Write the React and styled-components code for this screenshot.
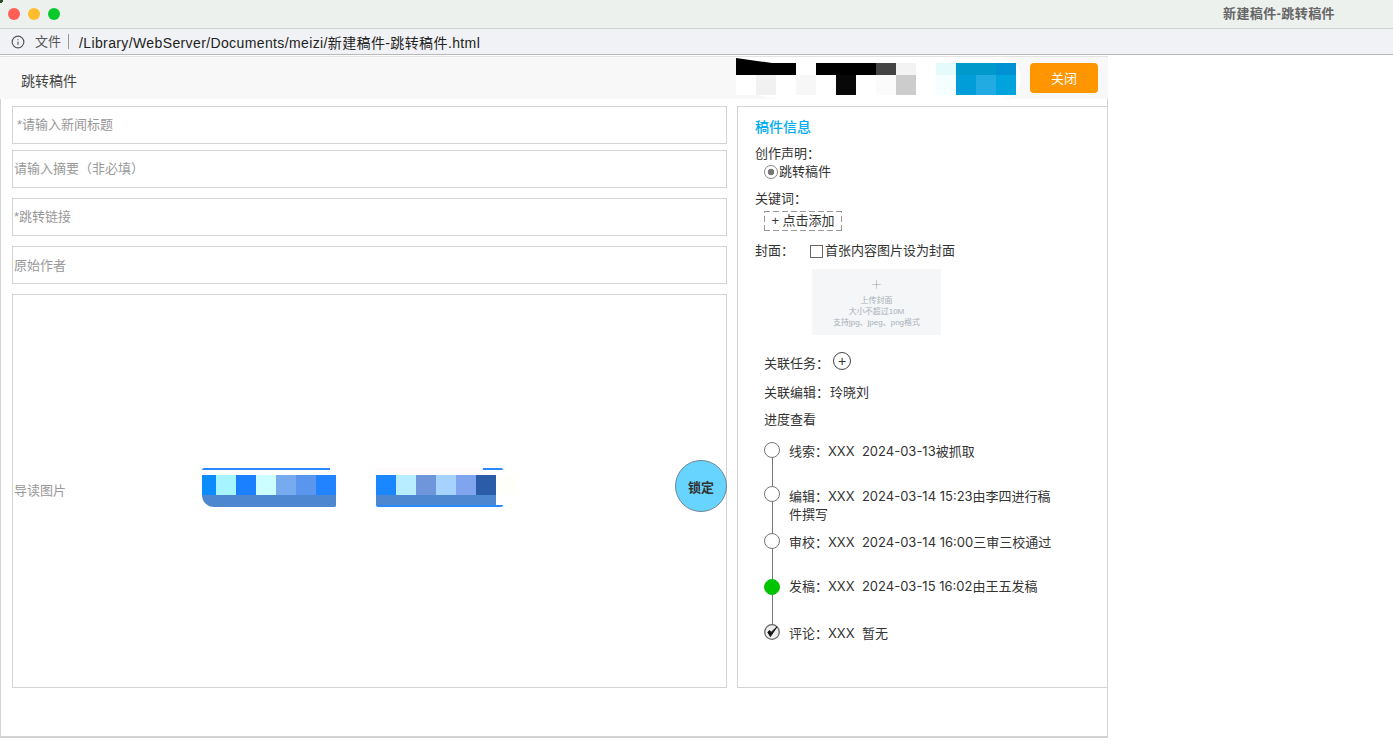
import styled, { createGlobalStyle } from "styled-components";
import { Info, Plus } from "lucide-react";

const GlobalStyle = createGlobalStyle`
  html, body {
    margin: 0;
    background: #fff;
    font-family: "Liberation Sans", "Noto Sans CJK SC", sans-serif;
  }
  * { box-sizing: border-box; }
`;

// browser chrome
const TitleBar = styled.div`
  height: 29px;
  display: flex;
  align-items: center;
  padding-left: 8px;
  background: radial-gradient(circle at 0 0, #2d4a2d 0 3px, transparent 3.5px), #edf1ee;
  border-bottom: 1px solid #cfd2d0;
`;

const Light = styled.span`
  width: 12px;
  height: 12px;
  border-radius: 50%;
  margin-right: 8px;
  background: ${(p) => p.$color};
`;

const WindowTitle = styled.div`
  margin-left: auto;
  width: 170px;
  font-size: 13px;
  letter-spacing: 0.4px;
  font-weight: 700;
  color: #666;
  margin-top: -3px;
`;

const AddressBar = styled.div`
  height: 26px;
  display: flex;
  align-items: center;
  padding-left: 11px;
  background: #f1f2f5;
  border-bottom: 1px solid #b9b9b9;
  font-size: 13px;
  color: #222;
`;

const Scheme = styled.span`
  margin-left: 10px;
  padding-right: 7px;
  border-right: 1px solid #999;
  line-height: 15px;
  color: #555;
`;

const Url = styled.span`
  margin-left: 10px;
  font-size: 14px;
  letter-spacing: 0.38px;
`;

// page
const Page = styled.div`
  width: 1108px;
  height: 682px;
  margin-top: 1px;
  border: 1px solid #d4d4d4;
  border-top: 1px solid #e4e4e4;
  border-bottom-width: 2px;
  background: #fff;
`;

const Header = styled.header`
  height: 42px;
  margin: 0 -1px;
  display: flex;
  align-items: flex-start;
  padding: 6px 10px 0 21px;
  background: #f8f8f8;
`;

const HeaderTitle = styled.div`
  margin-top: 6px;
  font-size: 14px;
  line-height: 24px;
  color: #444;
`;

const Mosaic = styled.div`
  position: relative;
  margin-left: auto;
  margin-right: 14px;
  width: 280px;

  &::before {
    content: "";
    position: absolute;
    inset: -6px -5px -4px 0;
    background: #fff;
    border-radius: 0 30px 30px 60px;
  }

  &::after {
    content: "";
    position: absolute;
    left: 0;
    top: -5px;
    width: 36px;
    height: 5px;
    background: #000;
    clip-path: polygon(0 0, 100% 100%, 0 100%);
  }
`;

const PixelRow = styled.div`
  position: relative;
  z-index: 1;
  display: flex;
  height: ${(p) => p.$height}px;
`;

const Pixel = styled.span`
  flex: none;
  width: ${(p) => p.$width || 20}px;
  background: ${(p) => p.$color};
`;

const CloseButton = styled.button`
  flex: none;
  width: 68px;
  height: 30px;
  padding: 0 0 2px;
  border: 0;
  border-radius: 4px;
  background: #ff9500;
  color: #fff;
  font: inherit;
  font-size: 13px;
`;

const Body = styled.div`
  display: flex;
  gap: 10px;
  padding: 7px 0 0 11px;
`;

const LeftColumn = styled.div`
  width: 715px;
`;

const Field = styled.input`
  display: block;
  width: 100%;
  height: 38px;
  margin-bottom: ${(p) => p.$after}px;
  padding: 0 0 ${(p) => (p.$lift ? 2 : 0)}px ${(p) => p.$indent}px;
  border: 1px solid #d4d4d4;
  border-radius: 0;
  outline: none;
  font: inherit;
  font-size: 13px;
  color: #333;

  &::placeholder {
    color: #999;
    opacity: 1;
  }
`;

const ImageBox = styled.div`
  height: 394px;
  display: flex;
  align-items: center;
  padding-left: 1px;
  border: 1px solid #d4d4d4;
  font-size: 13px;
  color: #999;
`;

const ImageLabel = styled.span`
  width: 188px;
  flex: none;
  margin-bottom: 3px;
`;

const Thumb = styled.div`
  position: relative;
  flex: none;
  width: ${(p) => p.$width}px;
  margin-right: ${(p) => p.$after}px;
  margin-bottom: 7px;
  padding-top: 5px;
  border-top: 2px solid #2b88ff;
  border-radius: 2px;

  &::before {
    content: "";
    position: absolute;
    top: -2px;
    left: ${(p) => p.$maskLeft}px;
    width: ${(p) => p.$maskWidth}px;
    height: 7px;
    background: ${(p) => p.$mask};
    border-radius: 0 0 16px 0;
  }
`;

const ThumbRow = styled.div`
  display: flex;
  height: 20px;
`;

const ThumbBand = styled.div`
  width: ${(p) => p.$width}px;
  height: ${(p) => p.$height}px;
  background: #4d87cf;
  border-radius: ${(p) => p.$radius};
`;

const ThumbEdge = styled.div`
  height: 2px;
  background: ${(p) => p.$color};
  border-radius: 0 0 2px 2px;
`;

const LockButton = styled.button`
  flex: none;
  margin-left: auto;
  margin-right: -1px;
  margin-bottom: 10px;
  width: 52px;
  height: 52px;
  padding: 0;
  border: 1px solid #6f8794;
  border-radius: 50%;
  background: #66d4ff;
  color: #333;
  font: inherit;
  font-size: 13px;
  font-weight: 700;
`;

const InfoPanel = styled.aside`
  flex: none;
  width: 371px;
  height: 582px;
  margin-right: -1px;
  padding: 11px 0 0 17px;
  border: 1px solid #d4d4d4;
  border-right-width: 0;
  font-size: 13px;
  color: #333;
`;

const PanelTitle = styled.div`
  line-height: 18px;
  font-size: 14px;
  font-weight: 500;
  color: #00aeef;
`;

const Row = styled.div`
  display: flex;
  align-items: center;
  min-height: 18px;
  line-height: 18px;
  margin-top: ${(p) => p.$top}px;
  margin-left: ${(p) => p.$indent || 0}px;
`;

const Radio = styled.span`
  width: 14px;
  height: 14px;
  margin-right: 1px;
  border: 1px solid #888;
  border-radius: 50%;
  background: radial-gradient(circle, #777 0 3px, #fff 3.6px);
`;

const AddTag = styled.div`
  width: 78px;
  height: 20px;
  margin: 3px 0 0 9px;
  line-height: 20px;
  text-align: center;
  background:
    repeating-linear-gradient(90deg, #999 0 6px, transparent 6px 9px) top / 100% 1px no-repeat,
    repeating-linear-gradient(90deg, #999 0 6px, transparent 6px 9px) bottom / 100% 1px no-repeat,
    repeating-linear-gradient(0deg, #999 0 6px, transparent 6px 9px) left / 1px 100% no-repeat,
    repeating-linear-gradient(0deg, #999 0 6px, transparent 6px 9px) right / 1px 100% no-repeat;
`;

const CoverLabel = styled.span`
  width: 55px;
`;

const Checkbox = styled.span`
  width: 13px;
  height: 13px;
  margin-right: 2px;
  border: 1px solid #666;
  background: #fff;
`;

const Upload = styled.div`
  width: 129px;
  height: 66px;
  margin: 9px 0 0 57px;
  padding-top: 9px;
  background: #f4f6f8;
  text-align: center;
  color: #aab0b8;
  font-size: 8px;
  line-height: 11px;
`;

const UploadPlus = styled.div`
  height: 17px;
  color: #999;
`;

const TaskLabel = styled.span`
  width: 69px;
`;

const RoundAdd = styled.span`
  width: 18px;
  height: 18px;
  margin-top: -7px;
  display: flex;
  align-items: center;
  justify-content: center;
  border: 1px solid #444;
  border-radius: 50%;
  font-size: 14px;
  line-height: 1;
`;

const EditorName = styled.span`
  margin-left: 1px;
`;

const Timeline = styled.div`
  margin: 13px 0 0 9px;
  font-family: Inter, "Noto Sans CJK SC", sans-serif;
`;

const Step = styled.div`
  position: relative;
  display: flex;
  height: ${(p) => p.$height}px;

  &:not(:last-child)::before {
    content: "";
    position: absolute;
    left: 8px;
    top: 8px;
    bottom: -8px;
    width: 1px;
    background: #777;
  }
`;

const Dot = styled.span`
  position: relative;
  z-index: 1;
  flex: none;
  width: 16px;
  height: 16px;
  border: 1px solid ${(p) => (p.$done ? "#00c400" : "#777")};
  border-radius: 50%;
  background: ${(p) => (p.$done ? "#00c400" : "#fff")};
`;

const CheckDot = styled.svg`
  position: relative;
  z-index: 1;
  flex: none;
`;

const StepText = styled.div`
  width: 268px;
  margin: ${(p) => p.$offset}px 0 0 9px;
  line-height: 18px;
`;

const topPixels = [
  [60, "#000"], [20, "#fff"], [60, "#000"], [20, "#444"], [20, "#f3f3f3"],
  [20, "#fff"], [20, "#e4fbfb"], [20, "#0099cc"], [20, "#0099cc"], [20, "#0090d4"],
];

const bottomPixels = [
  "#fff", "#f1f1f1", "#fff", "#f7f7f7", "#fff", "#080808", "#fff", "#fbfbfb",
  "#ccc", "#fff", "#f6ffff", "#009dd9", "#22abe3", "#00a3dc",
];

const thumbA = [
  [14, "#0a8cff"], [20, "#a6f4ff"], [20, "#1a80ff"], [20, "#ccfdff"],
  [20, "#78aaf0"], [20, "#5b96ee"], [20, "#2183ff"],
];

const thumbB = [
  [20, "#1a86ff"], [20, "#b8ecff"], [20, "#6f95db"], [20, "#a5d2ff"],
  [20, "#80a5ee"], [20, "#2b5ca8"], [20, "#fefff8"],
];

const steps = [
  { height: 44, offset: 0, text: "线索：XXX\u00a0\u00a02024-03-13被抓取" },
  { height: 47, offset: 1, text: "编辑：XXX\u00a0\u00a02024-03-14 15:23由李四进行稿件撰写" },
  { height: 46, offset: 0, text: "审校：XXX\u00a0\u00a02024-03-14 16:00三审三校通过" },
  { height: 45, offset: -2, text: "发稿：XXX\u00a0\u00a02024-03-15 16:02由王五发稿", done: true },
  { height: 20, offset: 0, text: "评论：XXX\u00a0\u00a0暂无", check: true },
];

const App = () => {
  return (
    <div>
      <GlobalStyle />
      <TitleBar>
        <Light $color="#ff5f57" />
        <Light $color="#ffbd2e" />
        <Light $color="#0ac92c" />
        <WindowTitle>新建稿件-跳转稿件</WindowTitle>
      </TitleBar>
      <AddressBar>
        <Info size={14} color="#555" />
        <Scheme>文件</Scheme>
        <Url>/Library/WebServer/Documents/meizi/新建稿件-跳转稿件.html</Url>
      </AddressBar>

      <Page>
        <Header>
          <HeaderTitle>跳转稿件</HeaderTitle>
          <Mosaic>
            <PixelRow $height={12}>
              {topPixels.map(([width, color], i) => (
                <Pixel key={i} $width={width} $color={color} />
              ))}
            </PixelRow>
            <PixelRow $height={20}>
              {bottomPixels.map((color, i) => (
                <Pixel key={i} $color={color} />
              ))}
            </PixelRow>
          </Mosaic>
          <CloseButton>关闭</CloseButton>
        </Header>

        <Body>
          <LeftColumn>
            <Field $after={6} $indent={4} $lift placeholder="*请输入新闻标题" />
            <Field $after={10} $indent={1} $lift placeholder="请输入摘要（非必填）" />
            <Field $after={10} $indent={1} $lift placeholder="*跳转链接" />
            <Field $after={10} $indent={1} placeholder="原始作者" />
            <ImageBox>
              <ImageLabel>导读图片</ImageLabel>
              <Thumb $width={134} $after={40} $mask="#fff" $maskLeft={128} $maskWidth={6}>
                <ThumbRow>
                  {thumbA.map(([width, color], i) => (
                    <Pixel key={i} $width={width} $color={color} />
                  ))}
                </ThumbRow>
                <ThumbBand $width={134} $height={12} $radius="0 0 4px 30px" />
              </Thumb>
              <Thumb $width={127} $after={0} $mask="#fffbfd" $maskLeft={0} $maskWidth={107}>
                <ThumbRow>
                  {thumbB.map(([width, color], i) => (
                    <Pixel key={i} $width={width} $color={color} />
                  ))}
                </ThumbRow>
                <ThumbBand $width={120} $height={10} $radius="0" />
                <ThumbEdge $color="#2b88ff" />
              </Thumb>
              <LockButton>锁定</LockButton>
            </ImageBox>
          </LeftColumn>

          <InfoPanel>
            <PanelTitle>稿件信息</PanelTitle>
            <Row $top={9}>创作声明：</Row>
            <Row $top={0} $indent={9}>
              <Radio />
              跳转稿件
            </Row>
            <Row $top={9}>关键词：</Row>
            <AddTag>+ 点击添加</AddTag>
            <Row $top={11}>
              <CoverLabel>封面：</CoverLabel>
              <Checkbox />
              首张内容图片设为封面
            </Row>
            <Upload>
              <UploadPlus>
                <Plus size={13} strokeWidth={1} />
              </UploadPlus>
              <div>上传封面</div>
              <div>大小不超过10M</div>
              <div>支持jpg、jpeg、png格式</div>
            </Upload>
            <Row $top={20} $indent={9}>
              <TaskLabel>关联任务：</TaskLabel>
              <RoundAdd>+</RoundAdd>
            </Row>
            <Row $top={11} $indent={9}>
              关联编辑：<EditorName>玲晓刘</EditorName>
            </Row>
            <Row $top={9} $indent={9}>进度查看</Row>
            <Timeline>
              {steps.map((step, i) => (
                <Step key={i} $height={step.height}>
                  {step.check ? (
                    <CheckDot width="16" height="16" viewBox="0 0 16 16">
                      <circle cx="8" cy="8" r="7.3" fill="#eee" stroke="#666" strokeWidth="1.3" />
                      <path d="M3.8 8.2 L6.4 12.6 L13 2.8 L7 8.4 L5.6 6.4 Z" fill="#111" stroke="#111" strokeWidth="0.9" />
                    </CheckDot>
                  ) : (
                    <Dot $done={step.done} />
                  )}
                  <StepText $offset={step.offset}>{step.text}</StepText>
                </Step>
              ))}
            </Timeline>
          </InfoPanel>
        </Body>
      </Page>
    </div>
  );
};

export default App;
